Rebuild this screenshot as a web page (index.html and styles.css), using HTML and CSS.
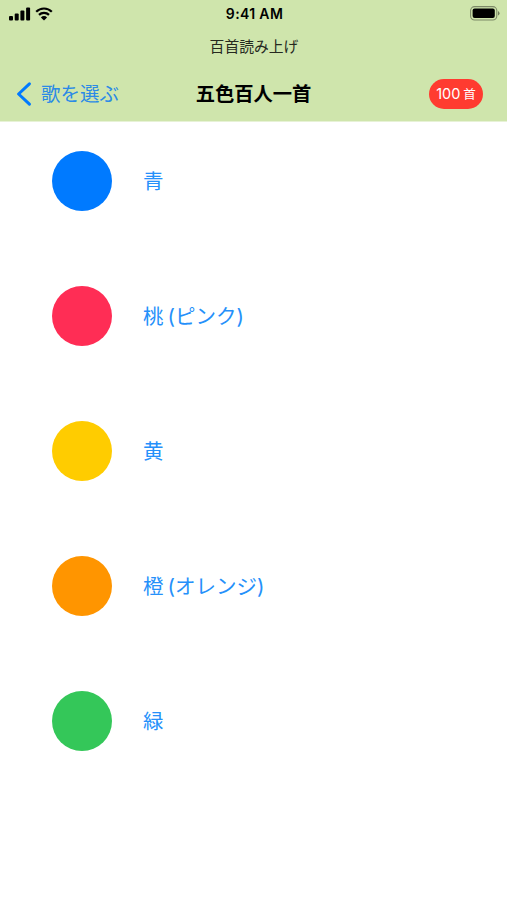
FILE: index.html
```html
<!DOCTYPE html>
<html lang="ja">
<head>
    <meta charset="UTF-8">
    <meta name="viewport" content="width=device-width, initial-scale=1.0">
    <title>五色百人一首</title>
    <link rel="stylesheet" href="styles.css">
</head>
<body>
    <header>
        <div class="status-bar">
            <div class="status-left">
                <svg class="signal" width="22" height="14" viewBox="0 0 22 14">
                    <rect x="0" y="9" width="4" height="4.5" rx="1"/>
                    <rect x="5.7" y="6.6" width="4" height="6.9" rx="1"/>
                    <rect x="11.4" y="3.6" width="4" height="9.9" rx="1"/>
                    <rect x="17.1" y="0.6" width="4" height="12.9" rx="1"/>
                </svg>
                <svg class="wifi" width="18" height="14" viewBox="0 0 18 14">
                    <path d="M1.2 4.7a11.1 11.1 0 0 1 15.6 0M4 7.9a7.1 7.1 0 0 1 10 0" fill="none" stroke="#000" stroke-width="2.2"/>
                    <path d="M9 13.5L5.9 10.4a4.4 4.4 0 0 1 6.2 0z"/>
                </svg>
            </div>
            <div class="time">9:41 AM</div>
            <div class="status-right">
                <svg class="battery" width="31" height="15" viewBox="0 0 31 15">
                    <rect x="1.6" y="0.6" width="26.2" height="13.4" rx="4" fill="none" stroke="#000" stroke-opacity="0.4" stroke-width="1.1"/>
                    <rect x="3.6" y="2.5" width="22.2" height="9.6" rx="2"/>
                    <path d="M29 5a2.5 2.5 0 0 1 0 4.6z" fill-opacity="0.45"/>
                </svg>
            </div>
        </div>
        <div class="prompt">百首読み上げ</div>
        <nav>
            <a href="#" class="back">
                <svg width="15" height="24" viewBox="0 0 15 24">
                    <path d="M13.4 1.8L2.6 12l10.8 10.2" fill="none" stroke="#007aff" stroke-width="3" stroke-linecap="round" stroke-linejoin="round"/>
                </svg>
                <span>歌を選ぶ</span>
            </a>
            <h1>五色百人一首</h1>
            <div class="badge"><span>100</span><span class="unit">首</span></div>
        </nav>
    </header>

    <main class="colors">
        <a href="#" class="color"><span class="circle blue"></span><span class="name">青</span></a>
        <a href="#" class="color"><span class="circle pink"></span><span class="name">桃<span class="kana">(ピンク)</span></span></a>
        <a href="#" class="color"><span class="circle yellow"></span><span class="name">黄</span></a>
        <a href="#" class="color"><span class="circle orange"></span><span class="name">橙<span class="kana">(オレンジ)</span></span></a>
        <a href="#" class="color"><span class="circle green"></span><span class="name">緑</span></a>
    </main>
</body>
</html>
```
FILE: styles.css
```css
body {
    font-family: Inter, "Noto Sans CJK JP", sans-serif;
    margin: 0;
    background-color: #fff;
    color: #000;
}

a {
    text-decoration: none;
}

header {
    height: 121px;
    background-color: #cfe5ac;
    border-bottom: 1px solid #e7f2d6;
}

.status-bar {
    display: grid;
    grid-template-columns: 1fr auto 1fr;
    align-items: center;
    height: 27px;
    padding: 0 7px 0 9px;
}

.status-left {
    display: flex;
    gap: 4px;
}

.status-right {
    display: flex;
    justify-content: flex-end;
}

.time {
    font-size: 14px;
    font-weight: 600;
    letter-spacing: 0.35px;
}

.prompt {
    height: 38px;
    padding: 1px 0 0 1px;
    line-height: 39px;
    text-align: center;
    font-size: 14.8px;
    color: #26291f;
}

nav {
    display: grid;
    grid-template-columns: 1fr auto 1fr;
    align-items: center;
    height: 55px;
    padding: 0 16px;
}

.back {
    display: flex;
    align-items: center;
    gap: 10px;
    font-size: 19.5px;
    line-height: 28px;
    color: #2b8ae6;
}

nav h1 {
    margin: 0;
    font-size: 19.3px;
    font-weight: 700;
    line-height: 28px;
}

.badge {
    display: flex;
    justify-content: center;
    align-items: center;
    justify-self: end;
    gap: 3px;
    width: 54px;
    height: 30px;
    margin-right: 8px;
    border-radius: 15px;
    background-color: #ff3b30;
    color: #fff;
    font-size: 14.5px;
}

.badge .unit {
    font-size: 12.5px;
}

.colors {
    display: flex;
    flex-direction: column;
    gap: 75px;
    padding: 29px 0 0 52px;
}

.color {
    display: flex;
    align-items: center;
    gap: 31px;
    height: 60px;
    font-size: 20.5px;
    color: #2590fa;
}

.circle {
    width: 60px;
    height: 60px;
    border-radius: 50%;
}

.name {
    padding-bottom: 2px;
}

.kana {
    margin-left: 4px;
}

.blue {
    background-color: #007aff;
}

.pink {
    background-color: #ff2d55;
}

.yellow {
    background-color: #ffcc00;
}

.orange {
    background-color: #ff9500;
}

.green {
    background-color: #34c759;
}
```
